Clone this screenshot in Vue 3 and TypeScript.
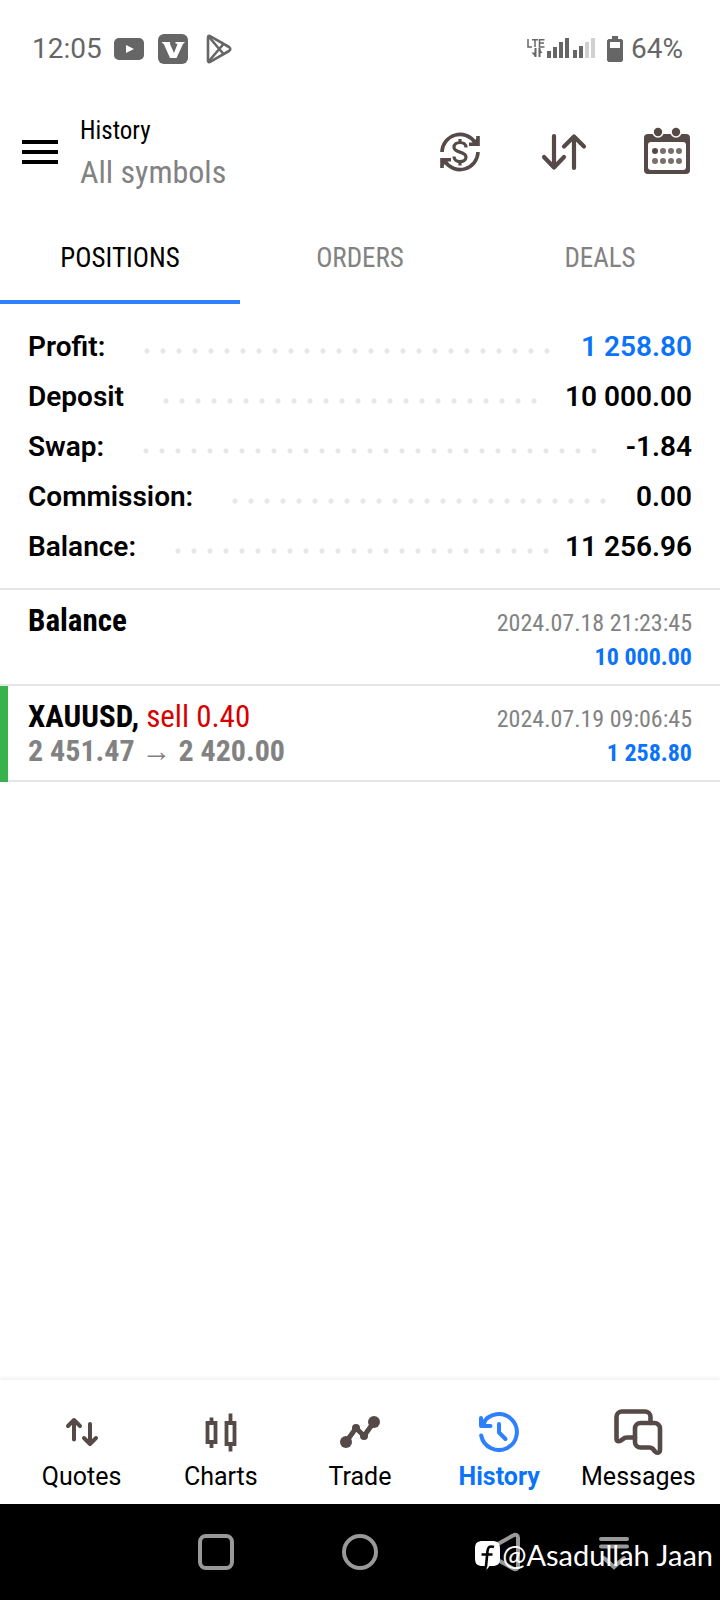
<script setup lang="ts">
import { ref } from 'vue'

interface SummaryRow {
  label: string
  value: string
  positive?: boolean
}

interface Deal {
  title: string
  action?: string
  prices?: string
  time: string
  amount: string
}

type Section = 'Quotes' | 'Charts' | 'Trade' | 'History' | 'Messages'

const tabs: string[] = ['POSITIONS', 'ORDERS', 'DEALS']
const activeTab = ref<string>('POSITIONS')

const summary: SummaryRow[] = [
  { label: 'Profit:', value: '1 258.80', positive: true },
  { label: 'Deposit', value: '10 000.00' },
  { label: 'Swap:', value: '-1.84' },
  { label: 'Commission:', value: '0.00' },
  { label: 'Balance:', value: '11 256.96' },
]

const deals: Deal[] = [
  { title: 'Balance', time: '2024.07.18 21:23:45', amount: '10 000.00' },
  {
    title: 'XAUUSD,',
    action: 'sell 0.40',
    prices: '2 451.47 → 2 420.00',
    time: '2024.07.19 09:06:45',
    amount: '1 258.80',
  },
]

const sections: Section[] = ['Quotes', 'Charts', 'Trade', 'History', 'Messages']
const activeSection = ref<Section>('History')
</script>

<template>
  <div class="screen">
    <div class="status">
      <span>12:05</span>
      <svg class="s-video" width="30" height="22" viewBox="0 0 30 22" aria-hidden="true">
        <rect width="30" height="22" rx="5" fill="#666" />
        <path d="M12 7v8l8-4z" fill="#fff" />
      </svg>
      <svg class="s-v" width="30" height="30" viewBox="0 0 30 30" aria-hidden="true">
        <rect width="30" height="30" rx="6" fill="#666" />
        <path d="M3.500 8h8.500v2l4 9 3.500-9-2-.5V8h9.500l-2 2-6.500 14h-6.500L6 10.500z" fill="#fff" />
      </svg>
      <svg class="s-play" width="26" height="30" viewBox="0 0 26 30" aria-hidden="true">
        <g fill="none" stroke="#666" stroke-width="2.600" stroke-linejoin="round">
          <path d="M2 3.500v23c0 1.500 1 2 2.500 1.200L23 17c1.700-1.200 1.700-2.800 0-4L4.500 2.300C3 1.500 2 2 2 3.500z" />
          <path d="M3 27 17.500 10M3 3l14.500 17" />
        </g>
      </svg>
      <svg class="s-signal" width="70" height="22" viewBox="0 0 70 22" aria-hidden="true">
        <g fill="none" stroke="#666" stroke-width="1.500">
          <path d="M1 1v8h4M5 1.700h6M8 1.700v7.300M17.500 1.700h-5v7.300h5M12.500 5h4.500" />
          <path d="M8.500 10v9M12.500 10v9" stroke-width="2" />
        </g>
        <path d="M4.500 14.500h4V19zM12 10v5h3.500z" fill="#666" />
        <g fill="#666">
          <rect x="20" y="13" width="4" height="7" />
          <rect x="26" y="9" width="4" height="11" />
          <rect x="32" y="4" width="4" height="16" />
          <rect x="38" y="0" width="4" height="20" />
          <rect x="46" y="12" width="4" height="8" />
          <rect x="52" y="8" width="4" height="12" />
        </g>
        <g fill="#d0d0d0">
          <rect x="58" y="4" width="4" height="16" />
          <rect x="64" y="0" width="4" height="20" />
        </g>
      </svg>
      <svg class="s-battery" width="16" height="26" viewBox="0 0 16 26" aria-hidden="true">
        <path d="M5 0h6v3h3.500L16 4.500v20L14.500 26h-13L0 24.500v-20L1.500 3H5z" fill="#666" />
        <rect x="3" y="6" width="10" height="6" fill="#fff" />
      </svg>
      <span>64%</span>
    </div>

    <header class="bar">
      <button class="menu" type="button" aria-label="Menu"><i></i><i></i><i></i></button>
      <div class="heading">
        <h1>History</h1>
        <p>All symbols</p>
      </div>
      <button class="icon" type="button" aria-label="Currency">
        <svg viewBox="0 0 48 48">
          <g fill="none" stroke="#554a47" stroke-width="3.600">
            <path d="M6 24A18 18 0 0 1 39 14.500" />
            <path d="M42 24A18 18 0 0 1 9 33.500" />
            <path d="M42 8v8.200H33" />
            <path d="M6 40v-8.200h9" />
            <path d="M30 19.500c0-3.200-2.500-5-6-5s-6 1.800-6 4.700c0 6.200 12 3.600 12 9.900 0 2.900-2.600 4.600-6 4.600s-6-1.900-6-5.200M24 11v4M24 33v4.500" stroke-width="3.200" />
          </g>
          <path d="M41 10v7h-7zM7 38v-7h7z" fill="#554a47" />
        </svg>
      </button>
      <button class="icon" type="button" aria-label="Sort">
        <svg viewBox="0 0 48 48">
          <g fill="none" stroke="#554a47" stroke-width="4.200" stroke-linecap="round" stroke-linejoin="round">
            <path d="M14 8v31.500M4 29l10 10.500L24 29" />
            <path d="M34 40V8.500M24 18.500 34 8.500l10 10" />
          </g>
        </svg>
      </button>
      <button class="icon" type="button" aria-label="Period">
        <svg viewBox="0 0 48 48">
          <rect x="0" y="6" width="46" height="40" rx="4" fill="#554a47" />
          <rect x="4" y="14" width="38" height="28" rx="3" fill="#fff" />
          <circle cx="14" cy="4" r="5.800" fill="#fff" />
          <circle cx="32" cy="4" r="5.800" fill="#fff" />
          <circle cx="14" cy="4" r="4.200" fill="#554a47" />
          <circle cx="32" cy="4" r="4.200" fill="#554a47" />
          <circle cx="11" cy="23" r="3" fill="#554a47" />
          <g fill="#7a706c">
            <circle cx="19" cy="23" r="3" /><circle cx="27" cy="23" r="3" /><circle cx="35" cy="23" r="3" />
            <circle cx="11" cy="33" r="3" /><circle cx="19" cy="33" r="3" /><circle cx="27" cy="33" r="3" /><circle cx="35" cy="33" r="3" />
          </g>
        </svg>
      </button>
    </header>

    <div class="tabs" role="tablist">
      <button
        v-for="tab in tabs"
        :key="tab"
        type="button"
        role="tab"
        :aria-selected="tab === activeTab"
        :class="{ active: tab === activeTab }"
        @click="activeTab = tab"
      >{{ tab }}</button>
    </div>

    <main>
      <dl class="summary">
        <div v-for="row in summary" :key="row.label">
          <dt>{{ row.label }}</dt>
          <span class="leader"><i></i></span>
          <dd :class="{ positive: row.positive }">{{ row.value }}</dd>
        </div>
      </dl>
      <ul class="deals">
        <li v-for="deal in deals" :key="deal.time" :class="{ won: deal.prices }">
          <strong>{{ deal.title }} <span v-if="deal.action">{{ deal.action }}</span></strong>
          <time>{{ deal.time }}</time>
          <b class="prices">{{ deal.prices ?? '\u00a0' }}</b>
          <b class="amount">{{ deal.amount }}</b>
        </li>
      </ul>
    </main>

    <nav class="sections">
      <button
        v-for="name in sections"
        :key="name"
        type="button"
        :class="{ active: name === activeSection }"
        @click="activeSection = name"
      >
        <svg viewBox="0 0 48 48" aria-hidden="true">
          <g v-if="name === 'Quotes'" stroke-width="4" stroke-linecap="round" stroke-linejoin="round">
            <path d="M16 31.500V12.500M10 18l6-6 6 6" />
            <path d="M32 16v19.500M26 30l6 6 6-6" />
          </g>
          <g v-else-if="name === 'Charts'" stroke-width="3.800">
            <path d="M10.500 15h8v19h-8zM14.500 9.500V15M14.500 34v6" />
            <path d="M29.500 15h8v21h-8zM33.500 5.500V15M33.500 36v7.500" />
          </g>
          <g v-else-if="name === 'Trade'" stroke-width="5">
            <path d="M10 34l10-14 8 8 10-14" />
            <g fill="currentColor" stroke="none">
              <circle cx="10" cy="34" r="6" /><circle cx="20" cy="20" r="4" />
              <circle cx="28" cy="28" r="4" /><circle cx="38" cy="14" r="6" />
            </g>
          </g>
          <g v-else-if="name === 'History'" stroke-width="4" stroke-linecap="round" stroke-linejoin="round">
            <path d="M6.200 27.500A18 18 0 1 0 8 15.500" />
            <path d="M6 10v8h9.500M7 17l2.500-2.500" />
            <path d="M24 16v8.500l6.500 6.500" />
          </g>
          <g v-else stroke-width="4.600" stroke-linecap="round" stroke-linejoin="round">
            <path d="M21 29.500h-8c-2 0-3 .5-4 1.500-4 3.500-6.500 2.500-6.500-.5V9a5.500 5.500 0 0 1 5.500-5.500h23A5.500 5.500 0 0 1 36.500 9v6" />
            <path d="M26.500 15h14A5.500 5.500 0 0 1 46 20.500v21c0 3.500-3 4.200-5 2l-2-2.500c-1-1-2-1.500-3.500-1.500h-9a5.500 5.500 0 0 1-5.500-5.500V20.500a5.500 5.500 0 0 1 5.500-5.500z" />
          </g>
        </svg>
        <span>{{ name }}</span>
      </button>
    </nav>

    <footer class="system">
      <button class="recent" type="button" aria-label="Recent apps">
        <svg viewBox="0 0 48 48"><rect x="8" y="8" width="32" height="32" rx="6" /></svg>
      </button>
      <button type="button" aria-label="Home">
        <svg viewBox="0 0 48 48"><circle cx="24" cy="24" r="16" /></svg>
      </button>
      <button type="button" aria-label="Back">
        <svg viewBox="0 0 48 48"><path d="M33 7.500 9 21c-3 2-3 4 0 6l24 13.500c3 1.500 5 .5 5-2.500V10c0-3-2-4-5-2.500z" /></svg>
      </button>
      <button class="hide" type="button" aria-label="Hide navigation">
        <svg viewBox="0 0 48 48"><path d="M11 11h26M11 18.500h26M14 30l10 9 10-9" stroke-linecap="round" /></svg>
      </button>
      <div class="credit">
        <svg width="25" height="30" viewBox="0 0 25 30" aria-hidden="true">
          <path d="M8 1h9c6 0 8 2 8 8v9c0 6-2 8-8 8h-2.500l-3 4 .5-4H8c-6 0-8-2-8-8V9c0-6 2-8 8-8z" fill="#fff" />
          <path d="M19 7c-4-1.500-6 0-6.500 4L11 26.500M6.500 14.500h11" fill="none" stroke="#000" stroke-width="2.600" />
        </svg>
        <span>@Asadullah Jaan</span>
      </div>
    </footer>
  </div>
</template>

<style>
body {
  margin: 0;
  background: #fff;
}
</style>

<style scoped>
.screen {
  display: flex;
  flex-direction: column;
  min-height: 100vh;
  font-family: Roboto, "Liberation Sans", sans-serif;
  color: #000;
  background: #fff;
}
button {
  padding: 0;
  border: 0;
  background: none;
  color: inherit;
  font: inherit;
}
svg {
  display: block;
  flex: none;
}
h1, p, dl, dd, ul {
  margin: 0;
  padding: 0;
}
.status {
  display: flex;
  align-items: center;
  box-sizing: border-box;
  height: 96px;
  padding: 2px 37px 0 32px;
  font-size: 28px;
  line-height: 32px;
  color: #666;
}
.s-video { margin-left: 12px; }
.s-v { margin-left: 14px; }
.s-play { margin-left: 18px; }
.s-signal { margin-left: auto; }
.s-battery { margin: 0 8px 0 10px; }
.bar,
.tabs,
.deals {
  font-family: "Roboto Condensed", "Liberation Sans Narrow", Roboto, sans-serif;
}
.bar {
  display: flex;
  align-items: center;
  gap: 56px;
  height: 112px;
  padding: 0 28px 0 22px;
}
.menu {
  display: grid;
  gap: 6px;
  width: 36px;
  margin-right: -34px;
}
.menu i {
  height: 4px;
  background: #000;
}
.heading {
  flex: 1;
  padding-top: 2px;
}
.heading h1 {
  font-size: 25px;
  font-weight: 400;
  line-height: 38px;
}
.heading p {
  font-size: 32px;
  line-height: 44px;
  color: #828282;
}
.icon,
.icon svg {
  width: 48px;
  height: 48px;
  overflow: visible;
}
.tabs {
  display: grid;
  grid-template-columns: repeat(3, 1fr);
  height: 96px;
}
.tabs button {
  padding-top: 8px;
  border-bottom: 4px solid transparent;
  font-size: 27px;
  color: #828282;
}
.tabs .active {
  border-color: #2f80ff;
  color: #000;
}
main {
  flex: 1;
}
.summary {
  padding: 18px 28px 16px;
  border-bottom: 2px solid #e6e6e6;
  font-size: 28px;
  font-weight: 600;
  line-height: 50px;
}
.summary div {
  display: flex;
}
.leader {
  flex: 1;
  margin: 0 10px 0 34px;
}
.leader i {
  display: block;
  width: round(down, 100%, 16px);
  height: 58px;
  margin-bottom: -8px;
  background: radial-gradient(circle, #e6e6e6 2px, transparent 3px) 0 0 / 16px 58px repeat-x;
}
.positive {
  color: #0a73fa;
}
.deals {
  list-style: none;
}
.deals li {
  display: grid;
  grid-template-columns: 1fr auto;
  grid-template-rows: 34px 34px;
  align-items: baseline;
  padding: 14px 28px 12px;
  border-bottom: 2px solid #e6e6e6;
  line-height: 34px;
}
.deals .won {
  position: relative;
}
.deals .won::before {
  content: "";
  position: absolute;
  inset: 0 auto -2px 0;
  width: 8px;
  background: #36b34a;
}
.deals strong {
  font-size: 31px;
}
.prices {
  font-size: 30px;
}
.deals strong span {
  font-weight: 400;
  color: #d80000;
}
.deals time,
.amount {
  font-size: 24px;
  text-align: right;
}
.deals time,
.prices {
  color: #828282;
}
.amount {
  color: #0a73fa;
}
.sections {
  display: grid;
  grid-template-columns: repeat(5, 1fr);
  padding: 28px 12px 13px;
  box-shadow: 0 -2px 4px #00000010;
  font-size: 25px;
  line-height: 28px;
}
.sections button {
  display: flex;
  flex-direction: column;
  align-items: center;
  gap: 7px;
}
.sections svg {
  width: 48px;
  height: 48px;
  overflow: visible;
  color: #554a47;
  fill: none;
  stroke: currentColor;
}
.sections .active {
  font-weight: 700;
  color: #0a73fa;
}
.sections .active svg {
  color: #2f80ff;
}
.system {
  position: relative;
  display: grid;
  grid-template-columns: repeat(5, 1fr);
  align-items: center;
  justify-items: center;
  height: 96px;
  background: #000;
}
.recent {
  grid-column: 2;
}
.hide {
  justify-self: start;
  margin-left: 14px;
}
.system button svg {
  width: 48px;
  height: 48px;
  fill: none;
  stroke: #999;
  stroke-width: 4;
}
.credit {
  position: absolute;
  top: 33px;
  right: 7px;
  display: flex;
  align-items: center;
  gap: 2px;
  font-family: Lato, sans-serif;
  font-size: 29px;
  line-height: 36px;
  color: #fff;
}
</style>
